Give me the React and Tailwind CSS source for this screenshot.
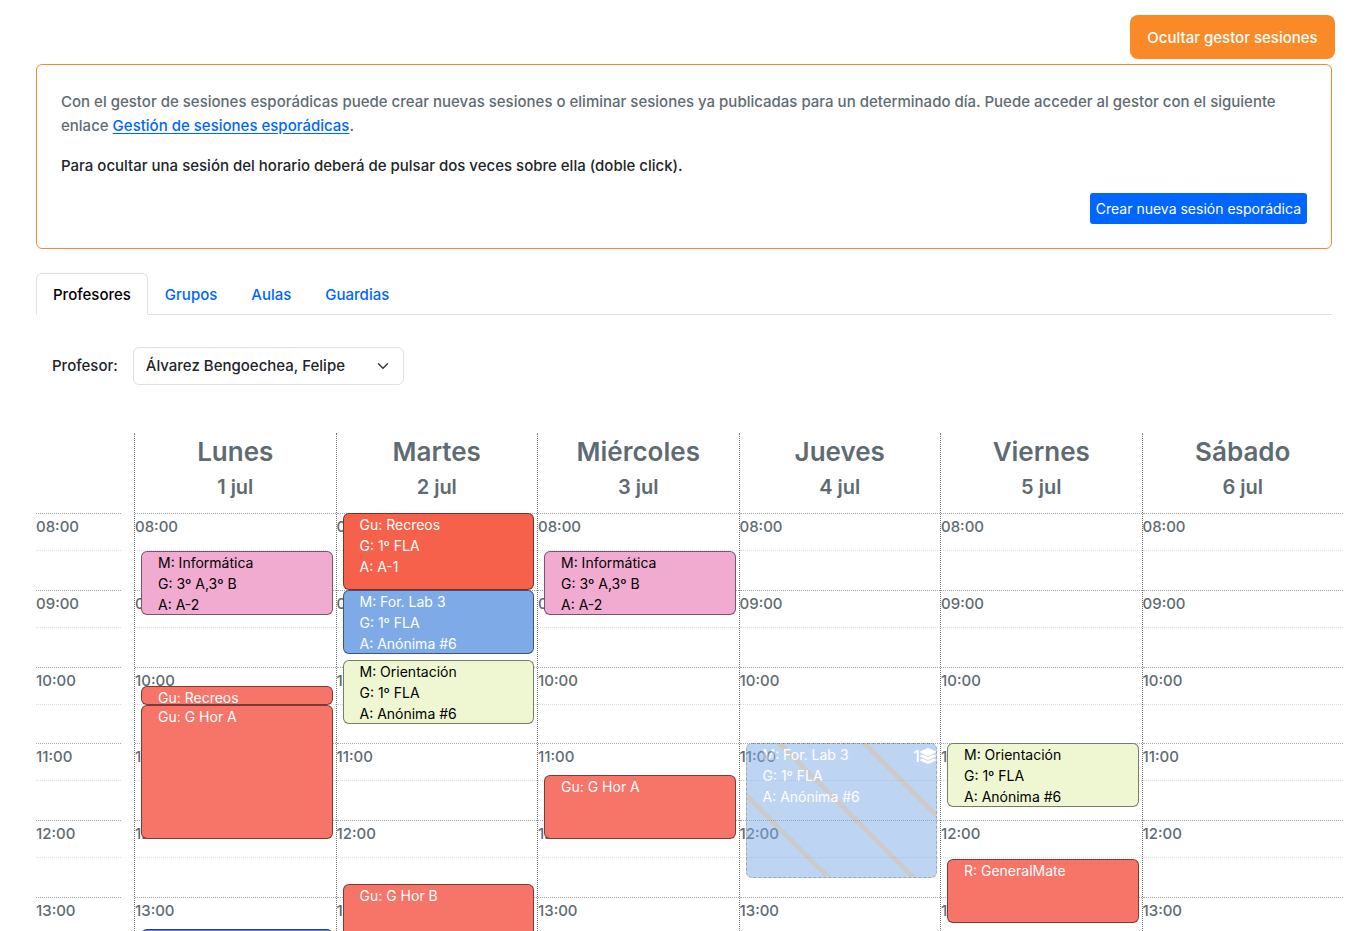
import { useState } from 'react';
import clsx from 'clsx';
import { FaLayerGroup } from 'react-icons/fa';

const TABS = ['Profesores', 'Grupos', 'Aulas', 'Guardias'];

const DAY_START = 8 * 60;
const DAY_MINUTES = 10 * 60;
const HOURS = ['08:00', '09:00', '10:00', '11:00', '12:00', '13:00', '14:00', '15:00', '16:00', '17:00'];

const COLORS = {
  pink: 'bg-[#f2abd0] text-black',
  red: 'bg-[#f5614a] text-white',
  coral: 'bg-[#f67468] text-white',
  blue: 'bg-[#7eabe8] text-white',
  indigo: 'bg-[#5f7de8] text-white',
  lime: 'bg-[#eff7d2] text-black',
};

const WEEK = [
  {
    name: 'Lunes',
    date: '1 jul',
    sessions: [
      { start: '08:30', end: '09:20', color: 'pink', lines: ['M: Informática', 'G: 3º A,3º B', 'A: A-2'] },
      { start: '10:15', end: '10:30', color: 'coral', lines: ['Gu: Recreos'] },
      { start: '10:30', end: '12:15', color: 'coral', lines: ['Gu: G Hor A'] },
      { start: '13:25', end: '14:15', color: 'indigo', lines: [] },
    ],
  },
  {
    name: 'Martes',
    date: '2 jul',
    sessions: [
      { start: '08:00', end: '09:00', color: 'red', lines: ['Gu: Recreos', 'G: 1º FLA', 'A: A-1'] },
      { start: '09:00', end: '09:50', color: 'blue', lines: ['M: For. Lab 3', 'G: 1º FLA', 'A: Anónima #6'] },
      { start: '09:55', end: '10:45', color: 'lime', lines: ['M: Orientación', 'G: 1º FLA', 'A: Anónima #6'] },
      { start: '12:50', end: '13:40', color: 'coral', lines: ['Gu: G Hor B'] },
    ],
  },
  {
    name: 'Miércoles',
    date: '3 jul',
    sessions: [
      { start: '08:30', end: '09:20', color: 'pink', lines: ['M: Informática', 'G: 3º A,3º B', 'A: A-2'] },
      { start: '11:25', end: '12:15', color: 'coral', lines: ['Gu: G Hor A'] },
    ],
  },
  {
    name: 'Jueves',
    date: '4 jul',
    sessions: [
      {
        start: '11:00', end: '12:45', color: 'blue', hidden: true, stacked: 1,
        lines: ['M: For. Lab 3', 'G: 1º FLA', 'A: Anónima #6'],
      },
    ],
  },
  {
    name: 'Viernes',
    date: '5 jul',
    sessions: [
      { start: '11:00', end: '11:50', color: 'lime', lines: ['M: Orientación', 'G: 1º FLA', 'A: Anónima #6'] },
      { start: '12:30', end: '13:20', color: 'coral', lines: ['R: GeneralMate'] },
    ],
  },
  { name: 'Sábado', date: '6 jul', sessions: [] },
];

const toMinutes = (time) => {
  const [h, m] = time.split(':').map(Number);
  return h * 60 + m;
};

const toPercent = (minutes) => `${(minutes / DAY_MINUTES) * 100}%`;

function HourRows() {
  return (
    <div className="grid h-full auto-rows-fr">
      {HOURS.map((hour) => (
        <div key={hour} className="border-t border-dotted border-[#a3a8ab]">
          <div className="h-9 pt-px leading-6">{hour}</div>
          <div className="border-t border-dotted border-[#dcdee0]" />
        </div>
      ))}
    </div>
  );
}

function Session({ session }) {
  const start = toMinutes(session.start);
  const end = toMinutes(session.end);

  return (
    <article
      className={clsx(
        'absolute right-[3px] left-[6px] overflow-hidden rounded-md border px-4 text-sm leading-[21px] font-normal',
        COLORS[session.color],
        session.hidden
          ? 'border-dashed border-black/50 bg-[repeating-linear-gradient(45deg,transparent,transparent_55px,#999_55px,#999_60px)] opacity-50'
          : 'border-black/50',
      )}
      style={{ top: toPercent(start - DAY_START), height: toPercent(end - start) }}
    >
      {session.lines.map((line) => (
        <p key={line} className="whitespace-nowrap">{line}</p>
      ))}
      {session.stacked && (
        <span className="absolute top-0 right-0 flex items-center text-base leading-6 font-medium">
          {session.stacked}
          <FaLayerGroup />
        </span>
      )}
    </article>
  );
}

// ── Weekly timetable ──
function Timetable() {
  return (
    <section className="-mr-[11px] grid grid-cols-[98px_repeat(6,minmax(0,1fr))] text-[#5f6b72]">
      <div className="mr-[13px] pt-20">
        <div className="h-[768px]">
          <HourRows />
        </div>
      </div>
      {WEEK.map((day) => (
        <div key={day.name} className="border-l border-dotted border-[#6f7478]">
          <header className="h-20 pt-px text-center font-semibold">
            <h3 className="text-[26px] leading-9">{day.name}</h3>
            <p className="text-xl leading-[34px]">{day.date}</p>
          </header>
          <div className="relative h-[768px]">
            <HourRows />
            {day.sessions.map((session) => (
              <Session key={session.start} session={session} />
            ))}
          </div>
        </div>
      ))}
    </section>
  );
}

function App() {
  const [tab, setTab] = useState('Profesores');
  const [showManager, setShowManager] = useState(true);

  return (
    <main className="bg-white pr-8 pl-9 font-['Inter',sans-serif] text-[15px] leading-6 font-medium text-[#212529]">
      <div className="-mr-[3px] flex justify-end pt-[15px] pb-[5px]">
        <button
          type="button"
          onClick={() => setShowManager(!showManager)}
          className="h-11 min-w-[205px] rounded-lg bg-[#fa8a28] px-4 pt-px text-white"
        >
          {showManager ? 'Ocultar gestor sesiones' : 'Mostrar gestor sesiones'}
        </button>
      </div>

      {showManager && (
        <section className="rounded-md border border-[#fa8a28] p-6 pt-[25px]">
          <p className="mb-4 text-[#5f6b72]">
            Con el gestor de sesiones esporádicas puede crear nuevas sesiones o eliminar sesiones ya publicadas para un determinado día. Puede acceder al gestor con el siguiente enlace{' '}
            <a href="#gestion" className="text-[#0066ff] underline underline-offset-2">Gestión de sesiones esporádicas</a>.
          </p>
          <p className="mb-[15px]">Para ocultar una sesión del horario deberá de pulsar dos veces sobre ella (doble click).</p>
          <div className="flex justify-end">
            <button type="button" className="h-[31px] rounded-[3px] bg-[#0066ff] px-1.5 text-sm font-normal text-white">
              Crear nueva sesión esporádica
            </button>
          </div>
        </section>
      )}

      <div role="tablist" className="mt-6 flex border-b border-[#dee2e6]">
        {TABS.map((name) => (
          <button
            key={name}
            type="button"
            role="tab"
            aria-selected={tab === name}
            onClick={() => setTab(name)}
            className={clsx(
              '-mb-px h-[42px] rounded-t-md border px-4 pt-px',
              tab === name
                ? 'border-[#dee2e6] border-b-white bg-white text-black'
                : 'border-transparent text-[#0066ff]',
            )}
          >
            {name}
          </button>
        ))}
      </div>

      <div className="mt-8 mb-12 flex items-center gap-[15px] pl-4">
        <label htmlFor="profesor">Profesor:</label>
        <div className="relative">
          <select
            id="profesor"
            className="h-[38px] w-[271px] appearance-none rounded-md border border-[#dee2e6] bg-white px-3"
          >
            <option>Álvarez Bengoechea, Felipe</option>
          </select>
          <svg
            className="pointer-events-none absolute top-[13px] right-[15px] size-3"
            viewBox="0 0 16 16"
            fill="none"
            stroke="#343a40"
            strokeWidth="2"
            strokeLinecap="round"
            strokeLinejoin="round"
          >
            <path d="m2 5 6 6 6-6" />
          </svg>
        </div>
      </div>

      <Timetable />
    </main>
  );
}

export default App;
